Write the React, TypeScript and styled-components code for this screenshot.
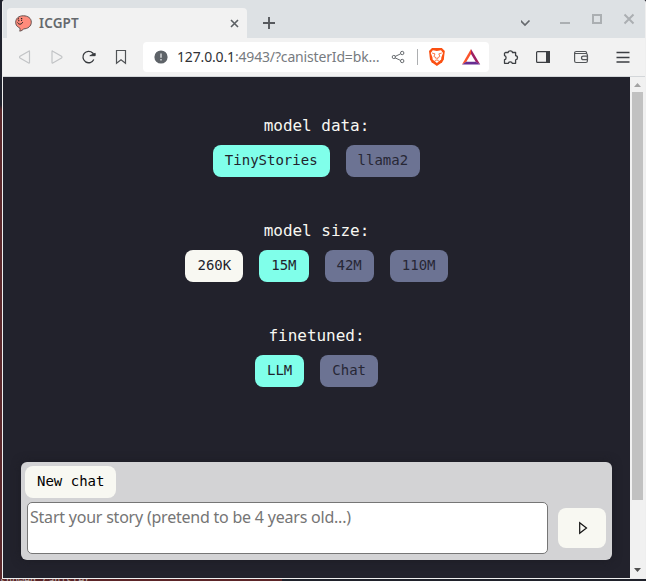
import React from "react";
import styled, { createGlobalStyle } from "styled-components";

const GlobalStyle = createGlobalStyle`
  *, *::before, *::after { box-sizing: border-box; }
  body { margin: 0; overflow: hidden; }
`;

const ui = `"Noto Sans", "Open Sans", sans-serif`;
const mono = `"DejaVu Sans Mono", monospace`;

const Desktop = styled.div`
  width: 646px;
  height: 581px;
  padding-left: 2px;
  display: flex;
  flex-direction: column;
  overflow: hidden;
  background: linear-gradient(#20222d 0 105px, #5c292c 110px 100%);
`;

const BrowserWindow = styled.div`
  flex: none;
  height: 579px;
  display: flex;
  flex-direction: column;
  border: solid #efefef;
  border-width: 0 1px 1px 1px;
  border-radius: 3px 3px 0 0;
  overflow: hidden;
  background: #f2f2f2;
`;

const BottomEdge = styled.div`
  flex: none;
  height: 2px;
  margin-left: -2px;
  background: linear-gradient(90deg, #5c2528 0 282px, #20222b 282px);
  overflow: hidden;
  font: 10px/4px ${mono};
  color: #b7a9a4;
`;

const TabStrip = styled.div`
  flex: none;
  height: 38px;
  display: flex;
  align-items: flex-end;
  background: #dde1e4;
  padding-left: 4px;
`;

const Tab = styled.div`
  width: 240px;
  height: 30px;
  padding: 0 8px 0 8px;
  display: flex;
  align-items: center;
  background: #f2f2f2;
  border-radius: 4px 4px 0 0;
`;

const TabTitle = styled.span`
  flex: 1;
  margin-left: 7px;
  font: 600 13.5px/18px ${ui};
  letter-spacing: 0.15px;
  color: #65696d;
`;

const TabActions = styled.div`
  flex: 1;
  height: 30px;
  display: flex;
  align-items: center;
  padding-left: 16px;
`;

const WindowControls = styled.div`
  flex: none;
  width: 124px;
  height: 38px;
`;

const Toolbar = styled.div`
  flex: none;
  height: 39px;
  display: flex;
  align-items: center;
  border-bottom: 1px solid #d3d6d9;
  background: #f2f2f2;
`;

const NavIcons = styled.svg`
  flex: none;
  width: 140px;
  height: 38px;
`;

const AddressBar = styled.div`
  flex: none;
  width: 346px;
  height: 30px;
  display: flex;
  align-items: center;
  padding-left: 11px;
  border-radius: 4px;
  background: #fff;
`;

const Address = styled.span`
  flex: none;
  width: 212px;
  margin-left: 9px;
  font: 14px/20px ${ui};
  letter-spacing: -0.16px;
  white-space: nowrap;
  color: #777b7f;
`;

const Host = styled.span`
  color: #303236;
`;

const ToolIcons = styled.svg`
  flex: none;
  width: 156px;
  height: 38px;
`;

const Viewport = styled.div`
  flex: 1;
  display: flex;
  min-height: 0;
`;

const Page = styled.main`
  width: 627px;
  display: flex;
  flex-direction: column;
  align-items: center;
  padding-top: 36px;
  background: #22222c;
`;

const Section = styled.section`
  height: 105px;
  display: flex;
  flex-direction: column;
  align-items: center;
`;

const Label = styled.div`
  height: 32px;
  font: 16px/25px ${mono};
  letter-spacing: -0.03px;
  color: #f8f8f2;
`;

const Options = styled.div`
  display: flex;
  gap: 16px;
`;

type Tone = "plain" | "active" | "disabled";
const fills: Record<Tone, string> = { plain: "#f8f8f2", active: "#80ffea", disabled: "#6c7393" };
const inks: Record<Tone, string> = { plain: "#22222c", active: "#22222c", disabled: "#272735" };

const Choice = styled.button<{ $tone: Tone }>`
  height: 32px;
  padding: 0 12px 2px;
  border: 0;
  border-radius: 8px;
  background: ${(p) => fills[p.$tone]};
  color: ${(p) => inks[p.$tone]};
  font: 14px/30px ${mono};
`;

const ChatPanel = styled.div`
  width: 591px;
  height: 98px;
  margin: 34px 0 0;
  padding: 4px;
  border-radius: 6px;
  background: #d3d3d5;
  box-shadow: 0 0 10px #1c1c24;
`;

const NewChat = styled(Choice)`
  display: block;
  color: #000;
`;

const Composer = styled.div`
  display: flex;
  align-items: center;
  gap: 10px;
  margin: 4px 2px 0;
`;

const Prompt = styled.textarea`
  flex: none;
  width: 521px;
  height: 52px;
  margin: 0;
  padding: 2px;
  border: 1px solid #767676;
  border-radius: 5px;
  resize: none;
  overflow: hidden;
  background: #fff;
  font: 16px/25px ${ui};
  letter-spacing: -0.22px;
  &::placeholder { color: #757575; opacity: 1; }
`;

const Send = styled.button`
  width: 48px;
  height: 40px;
  padding: 0 0 1px 1px;
  border: 0;
  border-radius: 8px;
  display: grid;
  place-items: center;
  background: #f8f8f2;
`;

const Scrollbar = styled.div`
  width: 15px;
  display: flex;
  flex-direction: column;
  align-items: center;
  justify-content: space-between;
  background: #f1f1f1;
`;

const Thumb = styled.div`
  width: 11px;
  height: 408px;
  margin-bottom: auto;
  background: #c1c1c1;
`;

const Arrow = styled.svg`
  display: block;
  width: 15px;
  height: 15px;
`;

const groups: { label: string; options: [string, Tone][] }[] = [
  { label: "model data:", options: [["TinyStories", "active"], ["llama2", "disabled"]] },
  { label: "model size:", options: [["260K", "plain"], ["15M", "active"], ["42M", "disabled"], ["110M", "disabled"]] },
  { label: "finetuned:", options: [["LLM", "active"], ["Chat", "disabled"]] },
];

const Favicon = () => (
  <svg width="17" height="17" viewBox="0 0 17 17">
    <path d="M3.7 12.4C1.5 11.1.6 9.4.7 7.2.9 3 4 .8 8.3.8c4.7 0 8 2.4 8 6.4 0 4.1-3.5 6.6-7.8 6.7-.8 1.3-2 2-3.9 2.2.6-.9.6-1.8.2-3.1z" fill="#ff8b7b" stroke="#655452" strokeWidth="1" />
    <path d="M2.700 4.200l1.300-.6M5.900 3.300l1.400.4M3.800 5v1.300M6.600 4.700v1.300M2.500 7.500c1.100 2.300 4.200 2.200 5.200-.4" fill="none" stroke="#202020" strokeWidth="1" />
  </svg>
);

const Chrome = () => (
  <TabStrip>
    <Tab>
      <Favicon />
      <TabTitle>ICGPT</TabTitle>
      <svg width="9" height="9" viewBox="0 0 9 9"><path d="M1 1l7 7M8 1L1 8" stroke="#5c6064" strokeWidth="1.6" /></svg>
    </Tab>
    <TabActions>
      <svg width="12" height="12" viewBox="0 0 12 12"><path d="M6 0v12M0 6h12" stroke="#56595d" strokeWidth="1.9" /></svg>
    </TabActions>
    <WindowControls>
      <svg width="124" height="38" viewBox="0 0 124 38" fill="none">
        <path d="M-.5 20.500L4 25l4.500-4.500" stroke="#65696d" strokeWidth="1.700" />
        <path d="M39 23h10" stroke="#abafb2" strokeWidth="2" />
        <rect x="72" y="15" width="8" height="8" stroke="#abafb2" strokeWidth="2" />
        <path d="M103.500 14.500l9 9M112.500 14.500l-9 9" stroke="#abafb2" strokeWidth="2" />
      </svg>
    </WindowControls>
  </TabStrip>
);

const Nav = () => (
  <NavIcons viewBox="3 38 140 38" fill="none">
    <path d="M29.500 51.500v11q0 .8-.8.4L20 58q-1-.9 0-1.800l8.700-5Q29.500 50.500 29.500 51.500z" stroke="#c2c4c6" strokeWidth="1.200" />
    <path d="M52 51.500v11q0 .8.8.4L61.500 58q1-.9 0-1.800l-8.700-5Q52 50.500 52 51.500z" stroke="#c2c4c6" strokeWidth="1.200" />
    <path d="M93.800 59.500A5.700 5.700 0 1 1 92.700 53l1.300 2.500" stroke="#36393d" strokeWidth="1.300" />
    <path d="M89.800 55.700h5.400v-2.400z" fill="#36393d" stroke="#36393d" strokeWidth=".9" />
    <path d="M116.500 50.500h9v12.700l-4.500-3.400-4.500 3.400z" stroke="#505356" strokeWidth="1.200" />
  </NavIcons>
);

const AddressIcons = () => (
  <svg width="100" height="30" viewBox="389 42 100 30" fill="none">
    <g stroke="#686c70" strokeWidth="1"><path d="M395 56.500l5.500-2.600M395 57.800l5.500 2.600" /><circle cx="393.800" cy="57" r="1.600" /><circle cx="402.200" cy="53" r="1.700" /><circle cx="402.200" cy="61" r="1.700" /></g>
    <path d="M417.500 49v16" stroke="#adafb1" />
    <path d="M432 48h9.800l3 3-1 8.500-1.600 2.800-5.300 3.700-5.300-3.700-1.600-2.800-1-8.500z" fill="#fb5012" />
    <path d="M432.800 50.300l4.100.7 4.100-.7 2 2.700-1.700 4.400-.1 2.200-4.300 3.500-4.300-3.500-.1-2.200-1.700-4.400z" fill="#fff" />
    <path d="M432 53l3 .9-1.100 2.600 2.200 1.200v1.600M441.800 53l-3 .9 1.100 2.600-2.200 1.200v1.600M434.300 61.400l2.600-1.500 2.600 1.500" stroke="#fb5012" strokeWidth=".75" />
    <path d="M471 49l-9 15.500 4.200-2.400L471 54z" fill="#fb542b" />
    <path d="M471 49l9.200 15.500-4.400-2.400L471 54z" fill="#9e1f63" />
    <path d="M462 64.500h18.200l-4.400-2.800h-9.600z" fill="#662d91" />
  </svg>
);

const Tools = () => (
  <ToolIcons viewBox="489 38 156 38" fill="none">
    <path d="M505.500 52.500h2.700c-.3-2.200 4.500-2.200 4.200 0h3.200v3.200c2.500.1 2.500 4 0 4.100v3.500h-3.400c-.1-2-3.700-2-3.800 0h-3.900v-3.600c2.100-.2 2.100-3.900 0-4.100v-2.300z" stroke="#3c3f43" strokeWidth="1.300" strokeLinejoin="round" />
    <rect x="536.600" y="51.600" width="12.800" height="10.800" rx="1" stroke="#3c3f43" strokeWidth="1.200" /><path d="M546 51h4v12h-4z" fill="#3c3f43" />
    <path d="M586.500 53.500v-1q0-1-1-1h-9.200q-1.700 0-1.700 1.300v8.200q0 1.500 1.500 1.500h9.800q1.500 0 1.500-1.500v-6q0-1.500-1.500-1.500h-10.800" stroke="#54575a" strokeWidth="1.200" />
    <path d="M587.500 56.200h-4q-2 0-2 1.700t2 1.700h4z" stroke="#54575a" strokeWidth="1.200" />
    <path d="M616.500 52.500h13M616.500 57.500h13M616.500 62h13" stroke="#3c3f43" strokeWidth="1.300" />
  </ToolIcons>
);

export default function App() {
  return (
    <Desktop>
      <GlobalStyle />
      <BrowserWindow>
        <Chrome />
        <Toolbar>
          <Nav />
          <AddressBar>
            <svg width="14" height="14" viewBox="0 0 14 14"><circle cx="7" cy="7" r="6.600" fill="#5e6368" /><path d="M7 3.500v4.300M7 9v1.600" stroke="#d5d6d8" strokeWidth="1.500" /></svg>
            <Address><Host>127.0.0.1</Host>:4943/?canisterId=bk…</Address>
            <AddressIcons />
          </AddressBar>
          <Tools />
        </Toolbar>
        <Viewport>
          <Page>
            {groups.map((group) => (
              <Section key={group.label}>
                <Label>{group.label}</Label>
                <Options>
                  {group.options.map(([name, tone]) => <Choice key={name} $tone={tone}>{name}</Choice>)}
                </Options>
              </Section>
            ))}
            <ChatPanel>
              <NewChat $tone="plain">New chat</NewChat>
              <Composer>
                <Prompt placeholder="Start your story (pretend to be 4 years old...)" />
                <Send aria-label="Send">
                  <svg width="10" height="14" viewBox="0 0 10 14"><path d="M1.700 1.800v10.400L8.500 7z" fill="none" stroke="#111" strokeWidth="1.200" /></svg>
                </Send>
              </Composer>
            </ChatPanel>
          </Page>
          <Scrollbar>
            <Arrow viewBox="0 0 15 15"><path d="M4 10l3.500-4L11 10z" fill="#a3a3a3" /></Arrow>
            <Thumb />
            <Arrow viewBox="0 0 15 15"><path d="M4 5l3.500 4L11 5z" fill="#505050" /></Arrow>
          </Scrollbar>
        </Viewport>
      </BrowserWindow>
      <BottomEdge>showed canister</BottomEdge>
    </Desktop>
  );
}
